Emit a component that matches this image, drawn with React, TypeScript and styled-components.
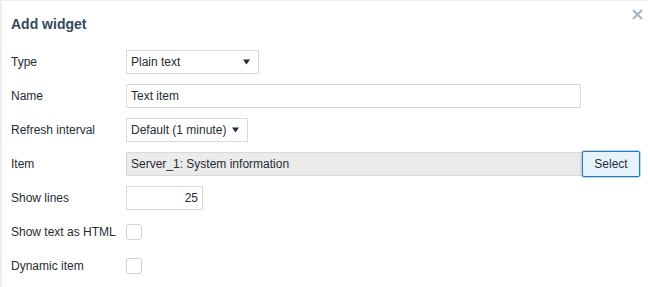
import React from 'react';
import styled, { createGlobalStyle } from 'styled-components';

const GlobalStyle = createGlobalStyle`
  html, body {
    margin: 0;
    padding: 0;
    background: #ebeef0;
  }
  body {
    font-family: 'Liberation Sans', Arial, sans-serif;
    font-size: 12px;
    color: #1f2c33;
  }
`;

const Dialog = styled.div`
  position: relative;
  margin: 1px 0 0 2px;
  height: 286px;
  background: #ffffff;
  box-sizing: border-box;
`;

const Header = styled.div`
  padding: 14px 9px 17px;
`;

const Title = styled.h4`
  margin: 0;
  font-size: 14px;
  line-height: 18px;
  font-weight: bold;
  color: #34495c;
`;

const CloseButton = styled.button`
  position: absolute;
  top: 7px;
  right: 4px;
  width: 13px;
  height: 13px;
  padding: 0;
  border: 0;
  background: none;
  cursor: pointer;
  display: flex;
`;

const Form = styled.div`
  display: grid;
  grid-template-columns: 115px 1fr;
  row-gap: 10px;
  padding: 0 9px;
`;

const Label = styled.div`
  height: 24px;
  display: flex;
  align-items: center;
  white-space: nowrap;
`;

const Field = styled.div`
  height: 24px;
  display: flex;
  align-items: center;
  gap: 1px;
`;

const SelectBox = styled.div<{ $width: number }>`
  width: ${({ $width }) => $width}px;
  height: 24px;
  box-sizing: border-box;
  border: 1px solid #d3dbdf;
  background: #ffffff;
  display: flex;
  align-items: center;
  justify-content: space-between;
  padding: 0 8px 0 4px;
`;

const TextInput = styled.input<{ $width: number; $readonly?: boolean; $alignRight?: boolean }>`
  width: ${({ $width }) => $width}px;
  height: 24px;
  box-sizing: border-box;
  border: 1px solid #d3dbdf;
  background: ${({ $readonly }) => ($readonly ? '#ebebeb' : '#ffffff')};
  padding: 0 4px;
  margin: 0;
  font-family: inherit;
  font-size: 12px;
  color: #1f2c33;
  text-align: ${({ $alignRight }) => ($alignRight ? 'right' : 'left')};
  outline: none;
`;

const Button = styled.button`
  height: 26px;
  width: 58px;
  box-sizing: border-box;
  border: 1px solid #2b79b6;
  border-radius: 2px;
  box-shadow: 0 0 0 1px #b8d6ee;
  background: #e6f3fd;
  font-family: inherit;
  font-size: 12px;
  color: #1f2c33;
  padding: 0;
`;

const Checkbox = styled.span`
  width: 16px;
  height: 16px;
  box-sizing: border-box;
  border: 1px solid #cbd4d8;
  border-radius: 3px;
  background: #ffffff;
`;

const Arrow = () => (
  <svg width="7" height="6" viewBox="0 0 7 6">
    <path d="M0 0.5 H7 L3.5 5.5 Z" fill="#1f2c33" />
  </svg>
);

const App: React.FC = () => (
  <>
    <GlobalStyle />
    <Dialog>
      <Header>
        <Title>Add widget</Title>
      </Header>
      <CloseButton aria-label="Close">
        <svg width="13" height="13" viewBox="0 0 13 13">
          <path d="M2 2 L11 11 M11 2 L2 11" stroke="#a6b3bb" strokeWidth="2" />
        </svg>
      </CloseButton>
      <Form>
        <Label>Type</Label>
        <Field>
          <SelectBox $width={133}>
            <span>Plain text</span>
            <Arrow />
          </SelectBox>
        </Field>

        <Label>Name</Label>
        <Field>
          <TextInput $width={455} value="Text item" readOnly />
        </Field>

        <Label>Refresh interval</Label>
        <Field>
          <SelectBox $width={122}>
            <span>Default (1 minute)</span>
            <Arrow />
          </SelectBox>
        </Field>

        <Label>Item</Label>
        <Field>
          <TextInput $width={455} $readonly value="Server_1: System information" readOnly />
          <Button>Select</Button>
        </Field>

        <Label>Show lines</Label>
        <Field>
          <TextInput $width={77} $alignRight value="25" readOnly />
        </Field>

        <Label>Show text as HTML</Label>
        <Field>
          <Checkbox />
        </Field>

        <Label>Dynamic item</Label>
        <Field>
          <Checkbox />
        </Field>
      </Form>
    </Dialog>
  </>
);

export default App;
